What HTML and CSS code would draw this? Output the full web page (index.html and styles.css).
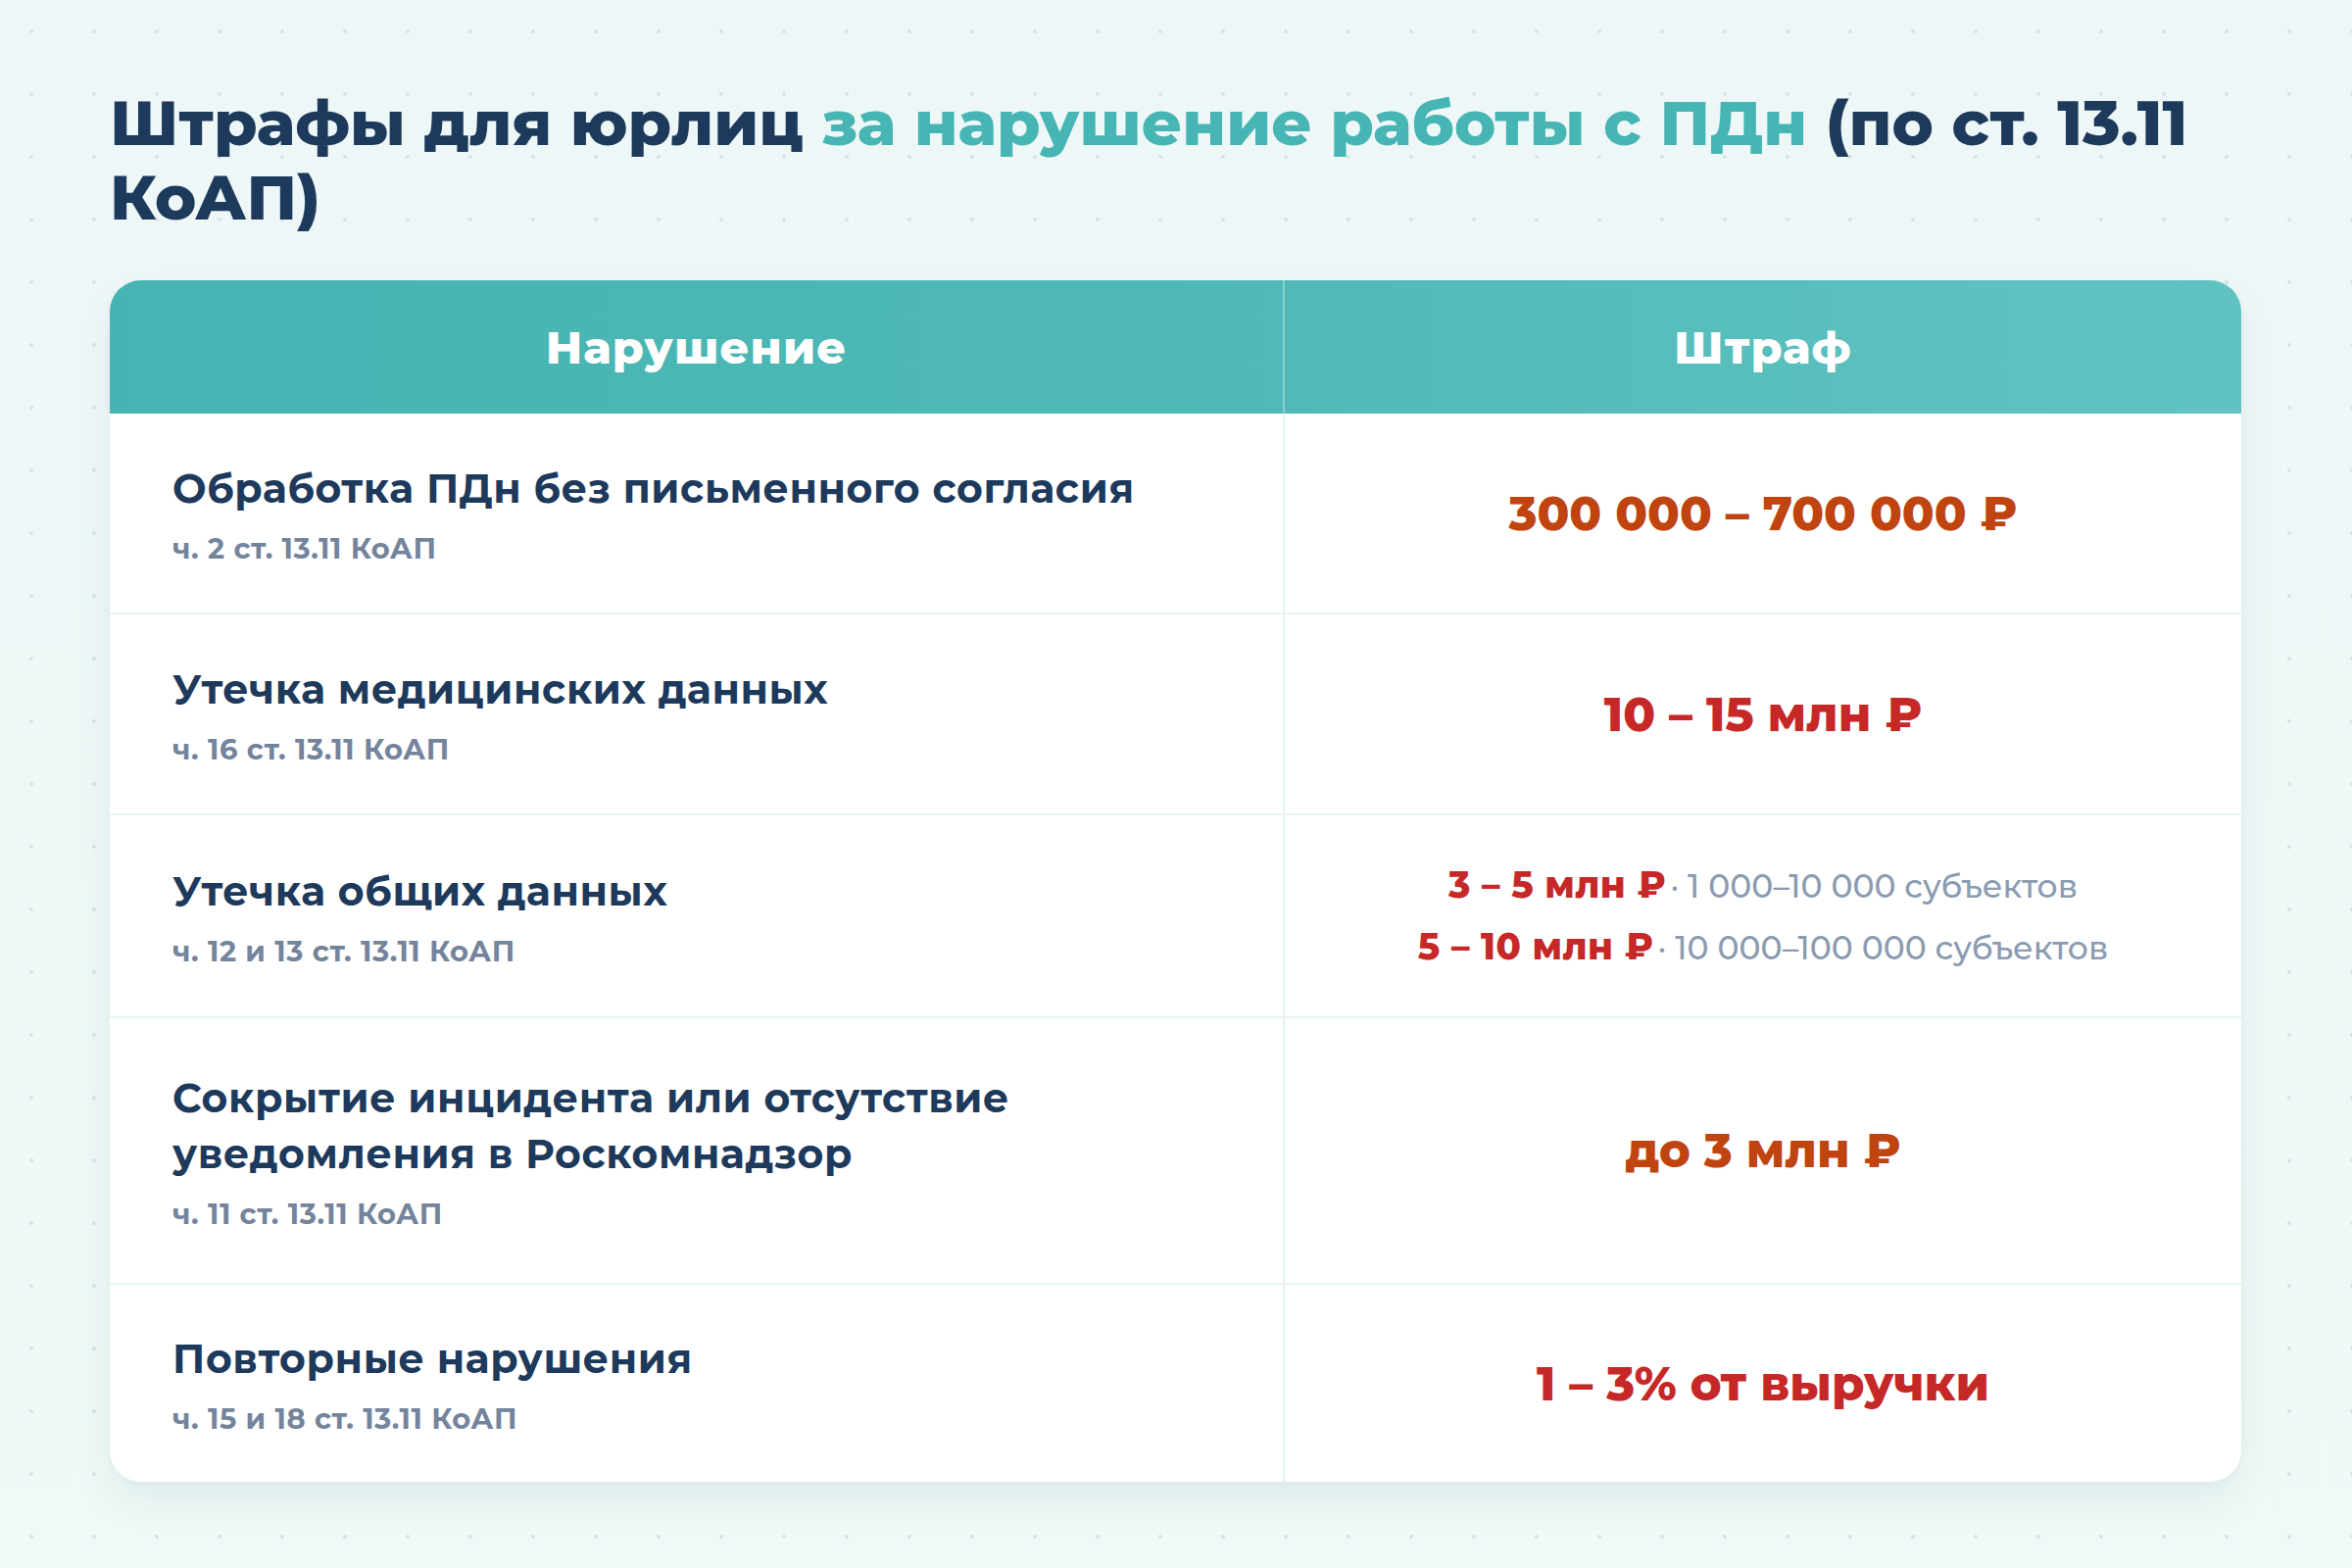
FILE: index.html
```html
<!DOCTYPE html>
<html lang="ru">
<head>
<meta charset="utf-8">
<title>Штрафы для юрлиц</title>
<link rel="stylesheet" href="styles.css">
</head>
<body>
<main class="page">
  <h1 class="title">Штрафы для юрлиц <span class="accent">за нарушение работы с ПДн</span> (по ст. 13.11 КоАП)</h1>
  <section class="card">
    <div class="head">
      <div class="head-cell">Нарушение</div>
      <div class="head-cell">Штраф</div>
    </div>
    <div class="row">
      <div class="cell-left">
        <div class="name">Обработка ПДн без письменного согласия</div>
        <div class="ref">ч. 2 ст. 13.11 КоАП</div>
      </div>
      <div class="cell-right"><div class="fine orange">300 000 – 700 000 ₽</div></div>
    </div>
    <div class="row">
      <div class="cell-left">
        <div class="name">Утечка медицинских данных</div>
        <div class="ref">ч. 16 ст. 13.11 КоАП</div>
      </div>
      <div class="cell-right"><div class="fine red">10 – 15 млн ₽</div></div>
    </div>
    <div class="row row-mid">
      <div class="cell-left">
        <div class="name">Утечка общих данных</div>
        <div class="ref">ч. 12 и 13 ст. 13.11 КоАП</div>
      </div>
      <div class="cell-right">
        <div class="tiers">
          <div class="tier"><span class="tier-sum">3 – 5 млн ₽</span> <span class="tier-note">· 1 000–10 000 субъектов</span></div>
          <div class="tier"><span class="tier-sum">5 – 10 млн ₽</span> <span class="tier-note">· 10 000–100 000 субъектов</span></div>
        </div>
      </div>
    </div>
    <div class="row row-tall">
      <div class="cell-left">
        <div class="name">Сокрытие инцидента или отсутствие<br>уведомления в Роскомнадзор</div>
        <div class="ref">ч. 11 ст. 13.11 КоАП</div>
      </div>
      <div class="cell-right"><div class="fine orange">до 3 млн ₽</div></div>
    </div>
    <div class="row row-last">
      <div class="cell-left">
        <div class="name">Повторные нарушения</div>
        <div class="ref">ч. 15 и 18 ст. 13.11 КоАП</div>
      </div>
      <div class="cell-right"><div class="fine red">1 – 3% от выручки</div></div>
    </div>
  </section>
</main>
</body>
</html>
```
FILE: styles.css
```css
* { box-sizing: border-box; }

html, body {
  margin: 0;
  padding: 0;
}

body {
  width: 2400px;
  min-height: 1600px;
  font-family: "Montserrat", "Noto Sans", "DejaVu Sans", sans-serif;
  color: #1d3a5c;
  background-color: #eef8f7;
  background-image:
    radial-gradient(circle at 32px 32px, #d4e6e6 0, #d4e6e6 1.6px, transparent 2.4px),
    linear-gradient(180deg, #eef7f7 0%, #eff9f7 100%);
  background-size: 64px 64px, 100% 100%;
}

.page {
  padding: 87px 113px 80px 112px;
}

.title {
  margin: 0 0 47px;
  font-size: 64px;
  line-height: 76px;
  font-weight: 800;
  color: #1d3a5c;
}

.accent { color: #46b5b3; }

.card {
  background: rgba(255, 255, 255, 0.97);
  border-radius: 32px;
  overflow: hidden;
  box-shadow: 0 18px 40px rgba(40, 95, 105, 0.08), 0 2px 6px rgba(40, 95, 105, 0.04);
}

.head {
  display: grid;
  grid-template-columns: 1197px 1fr;
  height: 136px;
  background: linear-gradient(90deg, #45b4b2 0%, #4fb9b7 50%, #60c3c1 100%);
}

.head-cell {
  display: flex;
  align-items: center;
  justify-content: center;
  color: #ffffff;
  font-size: 46px;
  font-weight: 800;
  letter-spacing: 0.025em;
}

.head-cell + .head-cell {
  border-left: 2px solid rgba(255, 255, 255, 0.3);
}

.row {
  display: grid;
  grid-template-columns: 1197px 1fr;
  border-bottom: 2px solid #e8f3f4;
}

.row-last { border-bottom: none; }

.cell-left {
  padding: 48px 64px;
  display: flex;
  flex-direction: column;
  justify-content: center;
}

.row-mid .cell-left { padding-top: 49px; padding-bottom: 49px; }
.row-tall .cell-left { padding-top: 53px; padding-bottom: 53px; }
.row-last .cell-left { padding-top: 47px; padding-bottom: 47px; }

.cell-right {
  border-left: 2px solid #e6f1f2;
  display: flex;
  align-items: center;
  justify-content: center;
}

.name {
  font-size: 41px;
  line-height: 57px;
  font-weight: 700;
  letter-spacing: 0.015em;
  color: #1d3a5c;
}

.ref {
  margin-top: 16px;
  font-size: 29px;
  line-height: 34px;
  font-weight: 700;
  letter-spacing: 0.02em;
  color: #74849c;
}

.fine {
  font-size: 48px;
  font-weight: 800;
}

.orange { color: #c0440f; }
.red { color: #c62828; }

.tiers {
  display: flex;
  flex-direction: column;
  align-items: center;
  gap: 5px;
  padding-top: 8px;
}

.tier {
  line-height: 50px;
  white-space: nowrap;
}

.tier-sum {
  font-size: 37px;
  font-weight: 800;
  color: #c62828;
  letter-spacing: 0.012em;
}

.tier-note {
  font-size: 33px;
  font-weight: 500;
  color: #8b9bb0;
}
```
